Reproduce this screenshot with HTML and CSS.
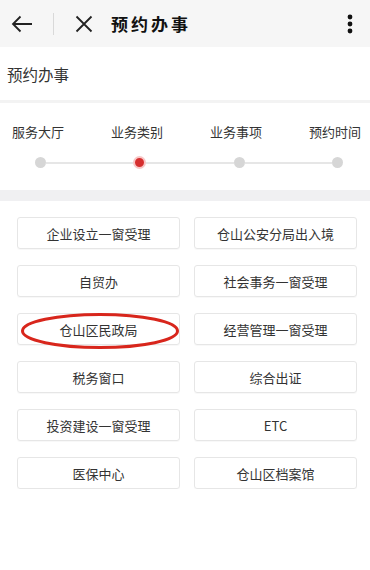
FILE: index.html
```html
<!DOCTYPE html>
<html lang="zh-CN">
<head>
    <meta charset="UTF-8">
    <meta name="viewport" content="width=device-width, initial-scale=1.0">
    <title>预约办事</title>
    <link rel="stylesheet" href="styles.css">
</head>
<body>
    <div class="topbar">
        <svg class="icon-back" width="22" height="18" viewBox="0 0 22 18">
            <path d="M21 9H2M9.5 1.5L2 9l7.5 7.5" fill="none" stroke="#222" stroke-width="1.8"/>
        </svg>
        <span class="divider"></span>
        <svg class="icon-close" width="18" height="18" viewBox="0 0 18 18">
            <path d="M1.5 1.5l15 15M16.5 1.5l-15 15" fill="none" stroke="#222" stroke-width="1.8"/>
        </svg>
        <span class="title">预约办事</span>
        <svg class="icon-more" width="6" height="20" viewBox="0 0 6 20">
            <circle cx="3" cy="3" r="2.4" fill="#111"/>
            <circle cx="3" cy="10" r="2.4" fill="#111"/>
            <circle cx="3" cy="17" r="2.4" fill="#111"/>
        </svg>
    </div>

    <div class="page-head">预约办事</div>

    <!-- steps -->
    <div class="steps">
        <div class="step-labels">
            <span>服务大厅</span>
            <span>业务类别</span>
            <span>业务事项</span>
            <span>预约时间</span>
        </div>
        <div class="step-track">
            <span class="dot"></span>
            <span class="seg"></span>
            <span class="dot active"></span>
            <span class="seg"></span>
            <span class="dot"></span>
            <span class="seg"></span>
            <span class="dot"></span>
        </div>
    </div>

    <div class="band"></div>

    <div class="grid">
        <a class="item">企业设立一窗受理</a>
        <a class="item">仓山公安分局出入境</a>
        <a class="item">自贸办</a>
        <a class="item">社会事务一窗受理</a>
        <a class="item marked">仓山区民政局
            <svg class="mark" width="160" height="38" viewBox="0 0 160 38">
                <ellipse cx="80" cy="19" rx="77.5" ry="16.5" fill="none" stroke="#d8261c" stroke-width="3"/>
            </svg>
        </a>
        <a class="item">经营管理一窗受理</a>
        <a class="item">税务窗口</a>
        <a class="item">综合出证</a>
        <a class="item">投资建设一窗受理</a>
        <a class="item">ETC</a>
        <a class="item">医保中心</a>
        <a class="item">仓山区档案馆</a>
    </div>
</body>
</html>
```

FILE: styles.css
```css
body {
    margin: 0;
    background-color: #fff;
    font-family: "Noto Sans CJK SC", "Noto Sans", sans-serif;
    color: #333;
}
.topbar {
    height: 47px;
    background-color: #f6f6f6;
    display: flex;
    align-items: center;
    box-sizing: border-box;
}
.icon-back {
    margin-left: 11px;
}
.divider {
    width: 1px;
    height: 22px;
    background-color: #d9d9d9;
    margin-left: 20px;
}
.icon-close {
    margin-left: 21px;
}
.title {
    margin-left: 18px;
    font-size: 17px;
    font-weight: 700;
    letter-spacing: 3px;
    color: #111;
}
.icon-more {
    margin-left: auto;
    margin-right: 17px;
}
.page-head {
    height: 53px;
    line-height: 54px;
    padding-left: 7px;
    font-size: 15.5px;
    color: #333;
    border-bottom: 3px solid #f3f3f3;
}
.steps {
    height: 87px;
    padding: 0 9px 0 12px;
}
.step-labels {
    display: flex;
    justify-content: space-between;
    font-size: 13px;
    color: #333;
    padding-top: 19px;
    line-height: 20px;
}
.step-track {
    display: flex;
    align-items: center;
    padding: 0 18px 0 23px;
    margin-top: 14px;
}
.dot {
    width: 11px;
    height: 11px;
    border-radius: 50%;
    background-color: #d6d6d6;
    flex: none;
}
.dot.active {
    width: 9px;
    height: 9px;
    background-color: #d62f2f;
    border: 2px solid #f8c6c6;
}
.seg {
    flex: 1;
    height: 2px;
    background-color: #e6e6e6;
}
.band {
    height: 11px;
    background-color: #f0f0f2;
}
.grid {
    display: grid;
    grid-template-columns: 163px 163px;
    column-gap: 14px;
    row-gap: 16px;
    padding: 16px 13px 0 17px;
}
.item {
    height: 32px;
    box-sizing: border-box;
    border: 1px solid #e6e6e6;
    border-radius: 3px;
    box-shadow: 0 1px 1px rgba(0, 0, 0, 0.03);
    display: flex;
    align-items: center;
    justify-content: center;
    font-size: 13px;
    color: #333;
}
.marked {
    position: relative;
}
.mark {
    position: absolute;
    left: 2px;
    top: -2px;
}
```
